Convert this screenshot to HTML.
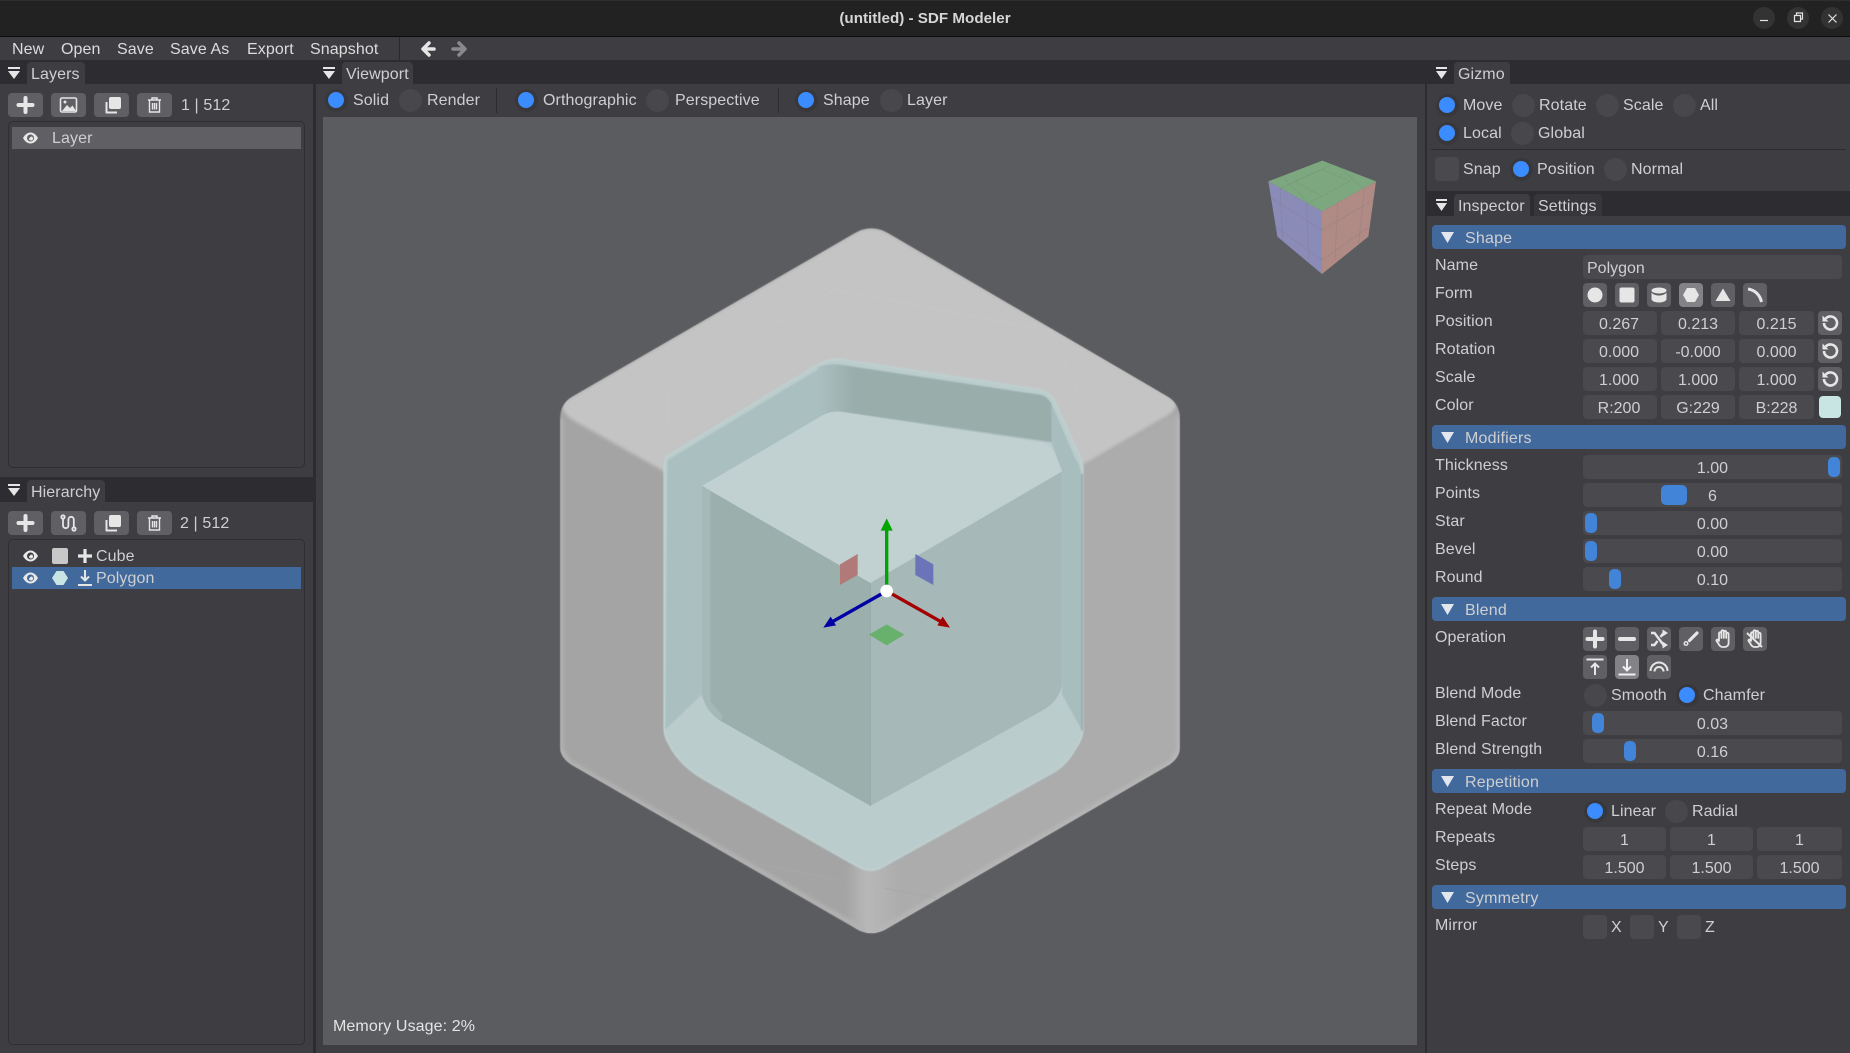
<!DOCTYPE html>
<html><head><meta charset="utf-8"><title>SDF Modeler</title>
<style>
html,body{margin:0;padding:0;width:1850px;height:1053px;overflow:hidden;background:#3e3d42;font-family:"Liberation Sans",sans-serif;font-size:16px;color:#cfcfd1}
div,span,svg{position:absolute}
.t{white-space:nowrap;line-height:24px;height:24px;letter-spacing:.1px;margin-top:1px}
.bar{background:#2d2c31;height:25px}
.tab{background:#3e3d42;height:22px;border-radius:4px 4px 0 0;line-height:25px;padding-left:4px;box-sizing:border-box;white-space:nowrap;letter-spacing:.1px}
.f{height:24px;background:#4a494e;border-radius:4px;text-align:center;line-height:27px;white-space:nowrap}
.b{width:24px;height:24px;background:#605f64;border-radius:4px}
.tb{width:35px;height:24px;background:#605f64;border-radius:4px}
.a{background:#838286}
.h{left:1432px;width:414px;height:24px;background:#41699c;border-radius:4px}
.h span{left:33px;top:0;line-height:27px;white-space:nowrap;letter-spacing:.2px}
.r{width:23px;height:23px;border-radius:50%;background:#48474c;margin-left:-.5px;margin-top:-.5px}
.r.on{background:#38373c}
.r.on:after{content:"";position:absolute;left:3.500px;top:3.500px;width:16px;height:16px;border-radius:50%;background:#3b8cff}
.th{background:#4285d8;border-radius:5px;height:20px;width:12px}
.c{width:24px;height:24px;background:#4a494e;border-radius:4px}
.ic{left:0;top:0;width:24px;height:24px;overflow:visible}
.l{left:1435px}
</style></head><body>

<!-- title bar -->
<div style="left:0;top:0;width:1850px;height:37px;background:#222;border-top:1px solid #2e2e2e;border-bottom:1px solid #0c0c0c;box-sizing:border-box"></div>
<div style="left:0;top:7px;width:1850px;text-align:center;line-height:24px;font-weight:bold;font-size:15.200px;color:#d6d6d6">(untitled) - SDF Modeler</div>
<div style="left:1753px;top:7px;width:22px;height:22px;border-radius:50%;background:#333"></div>
<div style="left:1787px;top:7px;width:22px;height:22px;border-radius:50%;background:#333"></div>
<div style="left:1821px;top:7px;width:22px;height:22px;border-radius:50%;background:#333"></div>
<svg style="left:1750px;top:0" width="100" height="37" fill="none" stroke="#e4e4e4" stroke-width="1.200"><path d="M10 20.500h8"/><path d="M44.500 15.500h6v6h-6z"/><path d="M46.500 15v-2h6v6h-2"/><path d="M78.500 14.500l8 8M86.500 14.500l-8 8"/></svg>

<!-- menu bar -->
<div style="left:1px;top:37px;width:1848px;height:23px;background:#3e3d42"></div>
<div class="t" style="left:12px;top:37px;color:#dcdcdc">New</div>
<div class="t" style="left:61px;top:37px;color:#dcdcdc">Open</div>
<div class="t" style="left:117px;top:37px;color:#dcdcdc">Save</div>
<div class="t" style="left:170px;top:37px;color:#dcdcdc">Save As</div>
<div class="t" style="left:247px;top:37px;color:#dcdcdc">Export</div>
<div class="t" style="left:310px;top:37px;color:#dcdcdc">Snapshot</div>
<div style="left:399px;top:37px;width:1px;height:23px;background:#2a292e"></div>
<svg style="left:418px;top:38px" width="54" height="22" fill="none" stroke-width="3.500" stroke-linecap="round" stroke-linejoin="round"><path d="M11 5l-6 6 6 6M6 11h10" stroke="#e6e6e6"/><path d="M41 5l6 6-6 6M46 11h-11" stroke="#8a898d"/></svg>

<!-- header bars -->
<div class="bar" style="left:0;top:60px;width:316px;height:24px"></div>
<div class="bar" style="left:316px;top:60px;width:1109px;height:24px"></div>
<div class="bar" style="left:1427px;top:60px;width:423px;height:24px"></div>

<!-- vertical dividers -->
<div style="left:313px;top:60px;width:3px;height:993px;background:#2d2c31"></div>
<div style="left:1425px;top:60px;width:2px;height:993px;background:#2d2c31"></div>

<!-- tabs -->
<div class="tab" style="left:27px;top:62px;width:58px">Layers</div>
<div class="tab" style="left:342px;top:62px;width:71px">Viewport</div>
<div class="tab" style="left:1454px;top:62px;width:56px">Gizmo</div>
<svg style="left:0;top:60px" width="1850" height="24" fill="#e6e6e6"><path d="M8 7h12v2H8zM8 11h12l-6 8z"/><path d="M323 7h12v2h-12zM323 11h12l-6 8z"/><path d="M1436 7h11v2h-11zM1436 11h11l-5.500 8z"/></svg>

<!-- Layers panel -->
<div class="tb" style="left:8px;top:93px"><svg class="ic" style="width:35px" viewBox="0 0 35 24"><path d="M17.500 5v14M10.500 12h14" stroke="#e6e6e6" stroke-width="4" stroke-linecap="round" fill="none"/></svg></div>
<div class="tb" style="left:51px;top:93px"><svg class="ic" style="width:35px" viewBox="0 0 35 24" fill="none"><rect x="9.500" y="5" width="16" height="14" rx="1.500" stroke="#e6e6e6" stroke-width="1.600"/><path d="M11 18l5-6 3 3 2.500-2.500 3.500 5.500z" fill="#e6e6e6"/><circle cx="14" cy="9" r="1.500" fill="#e6e6e6"/></svg></div>
<div class="tb" style="left:94px;top:93px"><svg class="ic" style="width:35px" viewBox="0 0 35 24" fill="none"><rect x="15" y="4" width="12" height="12" rx="2" fill="#e6e6e6"/><path d="M12.500 9v10.500h10.500" stroke="#e6e6e6" stroke-width="2" stroke-linejoin="round"/></svg></div>
<div class="tb" style="left:137px;top:93px"><svg class="ic" style="width:35px" viewBox="0 0 35 24" fill="none" stroke="#e6e6e6" stroke-width="1.400"><path d="M11 7h13M15 7V5h5v2M12.500 7.500v11.500h10V7.500M15.500 10v6.500M17.500 10v6.500M19.500 10v6.500"/></svg></div>
<div class="t" style="left:181px;top:93px">1 | 512</div>
<div style="left:8px;top:121px;width:297px;height:347px;border:1px solid #2f2e33;border-radius:5px;box-sizing:border-box"></div>
<div style="left:12px;top:127px;width:289px;height:22px;background:#605f64"></div>
<svg style="left:22px;top:130px" width="17" height="16" viewBox="0 0 17 16"><path d="M1 8c2-3.500 4.500-5.500 7.500-5.500S14 4.500 16 8c-2 3.500-4.500 5.500-7.500 5.500S3 11.500 1 8z" fill="#e8e8e8"/><circle cx="8.500" cy="8" r="3.500" fill="#605f64"/><path d="M9 6.500a2 2 0 1 1-2 2" fill="#e8e8e8"/></svg>
<div class="t" style="left:52px;top:126px">Layer</div>

<!-- Hierarchy -->
<div class="bar" style="left:0;top:477px;width:313px"></div>
<div class="tab" style="left:27px;top:480px;width:78px">Hierarchy</div>
<svg style="left:0;top:477px" width="30" height="25" fill="#e6e6e6"><path d="M8 7h12v2H8zM8 11h12l-6 8z"/></svg>
<div class="tb" style="left:8px;top:511px"><svg class="ic" style="width:35px" viewBox="0 0 35 24"><path d="M17.500 5v14M10.500 12h14" stroke="#e6e6e6" stroke-width="4" stroke-linecap="round" fill="none"/></svg></div>
<div class="tb" style="left:51px;top:511px"><svg class="ic" style="width:35px" viewBox="0 0 35 24" fill="none" stroke="#e6e6e6" stroke-width="1.800"><path d="M12 7.500v7a2.700 2.700 0 0 0 5.400 0v-6a2.700 2.700 0 0 1 5.400 0v8"/><circle cx="12" cy="6" r="1.700"/><circle cx="23" cy="18" r="1.700"/></svg></div>
<div class="tb" style="left:94px;top:511px"><svg class="ic" style="width:35px" viewBox="0 0 35 24" fill="none"><rect x="15" y="4" width="12" height="12" rx="2" fill="#e6e6e6"/><path d="M12.500 9v10.500h10.500" stroke="#e6e6e6" stroke-width="2" stroke-linejoin="round"/></svg></div>
<div class="tb" style="left:137px;top:511px"><svg class="ic" style="width:35px" viewBox="0 0 35 24" fill="none" stroke="#e6e6e6" stroke-width="1.400"><path d="M11 7h13M15 7V5h5v2M12.500 7.500v11.500h10V7.500M15.500 10v6.500M17.500 10v6.500M19.500 10v6.500"/></svg></div>
<div class="t" style="left:180px;top:511px">2 | 512</div>
<div style="left:8px;top:539px;width:297px;height:506px;border:1px solid #2f2e33;border-radius:5px;box-sizing:border-box"></div>
<div style="left:12px;top:567px;width:289px;height:22px;background:#41699c"></div>
<svg style="left:22px;top:548px" width="17" height="16" viewBox="0 0 17 16"><path d="M1 8c2-3.500 4.500-5.500 7.500-5.500S14 4.500 16 8c-2 3.500-4.500 5.500-7.500 5.500S3 11.500 1 8z" fill="#e8e8e8"/><circle cx="8.500" cy="8" r="3.500" fill="#3e3d42"/><path d="M9 6.500a2 2 0 1 1-2 2" fill="#e8e8e8"/></svg>
<svg style="left:22px;top:570px" width="17" height="16" viewBox="0 0 17 16"><path d="M1 8c2-3.500 4.500-5.500 7.500-5.500S14 4.500 16 8c-2 3.500-4.500 5.500-7.500 5.500S3 11.500 1 8z" fill="#e8e8e8"/><circle cx="8.500" cy="8" r="3.500" fill="#41699c"/><path d="M9 6.500a2 2 0 1 1-2 2" fill="#e8e8e8"/></svg>
<div style="left:52px;top:548px;width:16px;height:16px;background:#c8c8c8;border-radius:2px"></div>
<svg style="left:52px;top:570px" width="16" height="16" viewBox="0 0 16 16"><path d="M4.500 1h7L16 8l-4.500 7h-7L0 8z" fill="#c8e5e4"/></svg>
<svg style="left:77px;top:548px" width="16" height="16"><path d="M8 1v14M1 8h14" stroke="#e6e6e6" stroke-width="3.200" fill="none"/></svg>
<svg style="left:77px;top:569px" width="16" height="18" fill="none" stroke="#e6e6e6" stroke-width="2"><path d="M8 1v10M4 7.500l4 4 4-4M1 16h14"/></svg>
<div class="t" style="left:96px;top:544px">Cube</div>
<div class="t" style="left:96px;top:566px">Polygon</div>

<!-- Viewport toolbar -->
<div class="r on" style="left:325px;top:89px"></div><div class="t" style="left:353px;top:88px">Solid</div>
<div class="r" style="left:399px;top:89px"></div><div class="t" style="left:427px;top:88px">Render</div>
<div style="left:496px;top:88px;width:1px;height:25px;background:#2d2c31"></div>
<div class="r on" style="left:515px;top:89px"></div><div class="t" style="left:543px;top:88px">Orthographic</div>
<div class="r" style="left:646px;top:89px"></div><div class="t" style="left:675px;top:88px">Perspective</div>
<div style="left:778px;top:88px;width:1px;height:25px;background:#2d2c31"></div>
<div class="r on" style="left:795px;top:89px"></div><div class="t" style="left:823px;top:88px">Shape</div>
<div class="r" style="left:880px;top:89px"></div><div class="t" style="left:907px;top:88px">Layer</div>

<!-- Viewport -->
<div style="left:323px;top:117px;width:1094px;height:928px;background:#5b5c60"></div>
<svg style="left:0;top:0" width="1850" height="1053">
<defs>
<linearGradient id="st" x1="0" x2="1" y1="0" y2="0"><stop offset="0" stop-color="#b8b8b8" stop-opacity="0"/><stop offset=".4" stop-color="#b8b8b8"/><stop offset="1" stop-color="#b8b8b8" stop-opacity="0"/></linearGradient>
<linearGradient id="tw" gradientUnits="userSpaceOnUse" x1="660" y1="0" x2="750" y2="0"><stop offset="0" stop-color="#aabfbf"/><stop offset="1" stop-color="#99adab"/></linearGradient>
<clipPath id="sil"><path d="M745,70 Q787,47 830,70 L1490,405 Q1520,420 1520,450 L1520,1130 Q1520,1150 1495,1165 L830,1500 Q787,1525 745,1500 L75,1165 Q48,1150 48,1130 L48,450 Q48,420 78,405 Z"/></clipPath>
<filter id="bl" x="-5%" y="-5%" width="110%" height="110%"><feGaussianBlur stdDeviation="1.500"/></filter>
<filter id="bl2" x="-5%" y="-5%" width="110%" height="110%"><feGaussianBlur stdDeviation="4"/></filter>
</defs>
<g transform="translate(540,200) scale(.42088,.48473)">
 <path d="M745,70 Q787,47 830,70 L1490,405 Q1520,420 1520,450 L1520,1130 Q1520,1150 1495,1165 L830,1500 Q787,1525 745,1500 L75,1165 Q48,1150 48,1130 L48,450 Q48,420 78,405 Z" fill="#a4a4a4" filter="url(#bl)"/>
 <g clip-path="url(#sil)">
  <g filter="url(#bl2)">
  <path d="M787,800 L1530,430 L1530,1150 L787,1530 Z" fill="#acacac"/>
  <rect x="725" y="1370" width="130" height="160" fill="url(#st)"/>
  <path d="M50,450 L50,1135 L70,1160 L775,1510" fill="none" stroke="#b2b2b2" stroke-width="10"/>
  <path d="M1518,450 L1518,1135 L1500,1160 L800,1510" fill="none" stroke="#b6b6b6" stroke-width="10"/>
  <path d="M745,70 Q787,47 830,70 L1495,405 Q1528,425 1490,445 L787,800 L80,455 Q28,425 78,405 Z" fill="#c4c4c4"/>
  </g>
 </g>
 <path d="M305,470 L305,385 L700,185 L1215,270 L1330,500" fill="none" stroke="#c7c7c7" stroke-width="2"/>
 <path d="M520,1370 L720,1405 M820,1420 L940,1440" fill="none" stroke="#a8a8a8" stroke-width="2"/>
 <path d="M300,530 L660,340 Q690,325 720,330 L1190,392 Q1215,398 1225,420 L1275,515 Q1290,540 1290,560 L1290,1090 Q1290,1110 1270,1135 Q1250,1165 1220,1180 L815,1375 Q787,1390 755,1375 L390,1195 Q330,1165 305,1120 Q295,1105 295,1090 L295,555 Q295,540 300,530Z" fill="#bbcccc" stroke="#bfd0d0" stroke-width="4" filter="url(#bl)"/>
 <g filter="url(#bl)">
 <path d="M303,537 L665,347 Q690,337 715,342 L715,435 L385,590 L385,1020 L298,1092 Z" fill="#aabfbf"/>
 <path d="M660,345 Q690,336 715,340 L1190,402 Q1205,405 1215,420 L1218,500 L700,435 L660,455 Z" fill="url(#tw)"/>
 <path d="M1215,420 L1270,530 Q1285,550 1285,565 L1285,1090 L1240,1020 L1240,560 L1215,500 Z" fill="#a8bdbd"/>
 <path d="M1288,565 L1288,1095" fill="none" stroke="#9fb0b0" stroke-width="6"/>
 </g>
 <path d="M385,590 L785,790 L785,1250 L430,1075 Q395,1055 385,1020 Z" fill="#9bafad"/>
 <path d="M785,790 L1240,560 L1240,1000 Q1235,1030 1200,1050 L785,1250 Z" fill="#a6b8b8"/>
 <path d="M385,590 L660,450 Q690,432 720,438 L1190,500 Q1215,505 1225,525 L1240,560 L785,790 Z" fill="#c1d1d1"/>
 <path d="M385,590 L405,600 L405,1035 L432,1062 L432,1076 Q395,1055 385,1020 Z" fill="#a5bab8" filter="url(#bl)"/>
 <path d="M1232,565 L1232,1010" fill="none" stroke="#a0b4b3" stroke-width="10" filter="url(#bl)"/>
 <path d="M785,792 L785,1250" stroke="#97aaa8" stroke-width="2.500" fill="none"/>
</g>

<!-- gizmo -->
<g transform="translate(800,500) scale(.33333)">
 <path d="M173,162 L173,225 L120,255 L120,193 Z" fill="#b17a78"/>
 <path d="M346,162 L400,193 L400,255 L346,225 Z" fill="#6b74b8"/>
 <path d="M260,373 L313,404 L260,436 L207,404 Z" fill="#68b16c"/>
 <path d="M260,265V85" stroke="#00a500" stroke-width="10" fill="none"/>
 <path d="M260,55 L242,92 L278,92 Z" fill="#00a500"/>
 <path d="M260,273 L92,368" stroke="#0000a5" stroke-width="10" fill="none"/>
 <path d="M70,383 L92,350 L108,376 Z" fill="#0000a5"/>
 <path d="M260,273 L428,368" stroke="#a50000" stroke-width="10" fill="none"/>
 <path d="M450,383 L428,350 L412,376 Z" fill="#a50000"/>
 <circle cx="260" cy="273" r="19" fill="#fff"/>
</g>

<!-- orientation cube -->
<g transform="translate(1240,140) scale(.33333)">
 <path d="M247,62 L408,124 L246,214 L85,124 Z" fill="#7da87f"/>
 <path d="M85,124 L246,214 L246,402 L112,290 Z" fill="#8b8bb8"/>
 <path d="M246,214 L408,124 L385,290 L246,402 Z" fill="#b08a85"/>
 <g fill="none" stroke="#6a6f6a" stroke-opacity=".3" stroke-width="2" stroke-dasharray="14 3">
  <path d="M122,105 L207,190 M165,124 L246,170 M245,88 L330,124 M285,70 L370,145 M165,124 L245,88 M205,190 L330,124 M122,145 L285,70"/>
  <path d="M120,142 L128,305 M200,190 L206,358 M95,175 L246,270 M108,262 L246,360"/>
  <path d="M293,188 L285,360 M373,145 L356,313 M246,270 L403,178 M246,360 L386,262"/>
 </g>
</g>
</svg>
<div class="t" style="left:333px;top:1014px;color:#e4e4e4">Memory Usage: 2%</div>

<!-- Gizmo panel -->
<div class="r on" style="left:1436px;top:94px"></div><div class="t" style="left:1463px;top:93px">Move</div>
<div class="r" style="left:1512px;top:94px"></div><div class="t" style="left:1539px;top:93px">Rotate</div>
<div class="r" style="left:1596px;top:94px"></div><div class="t" style="left:1623px;top:93px">Scale</div>
<div class="r" style="left:1673px;top:94px"></div><div class="t" style="left:1700px;top:93px">All</div>
<div class="r on" style="left:1436px;top:122px"></div><div class="t" style="left:1463px;top:121px">Local</div>
<div class="r" style="left:1511px;top:122px"></div><div class="t" style="left:1538px;top:121px">Global</div>
<div style="left:1431px;top:149px;width:415px;height:1px;background:#2d2c31"></div>
<div class="c" style="left:1435px;top:157px"></div><div class="t" style="left:1463px;top:157px">Snap</div>
<div class="r on" style="left:1510px;top:158px"></div><div class="t" style="left:1537px;top:157px">Position</div>
<div class="r" style="left:1604px;top:158px"></div><div class="t" style="left:1631px;top:157px">Normal</div>

<!-- Inspector -->
<div class="bar" style="left:1427px;top:191px;width:423px"></div>
<svg style="left:1428px;top:191px" width="24" height="25" fill="#e6e6e6"><path d="M8 8h11v2H8zM8 12h11l-5.500 8z"/></svg>
<div class="tab" style="left:1454px;top:194px;width:76px">Inspector</div>
<div class="tab" style="left:1534px;top:194px;width:68px;background:#37363b">Settings</div>

<div class="h" style="top:225px"><svg style="left:9px;top:7px" width="13" height="11"><path d="M0 0h13l-6.500 11z" fill="#e2e6ee"/></svg><span>Shape</span></div>
<div class="t l" style="top:253px">Name</div>
<div class="f" style="left:1583px;top:255px;width:259px;text-align:left;padding-left:4px;box-sizing:border-box">Polygon</div>
<div class="t l" style="top:281px">Form</div>
<div class="b" style="left:1583px;top:283px"><svg class="ic"><circle cx="12" cy="12" r="7.500" fill="#e6e6e6"/></svg></div>
<div class="b" style="left:1615px;top:283px"><svg class="ic"><rect x="4.500" y="4.500" width="15" height="15" rx="2" fill="#e6e6e6"/></svg></div>
<div class="b" style="left:1647px;top:283px"><svg class="ic"><path d="M4.500 9.500v6.500c0 2 3.500 3.500 7.500 3.500s7.500-1.500 7.500-3.500V9.500c-1.500 2-4.500 3-7.500 3s-6-1-7.500-3z" fill="#e6e6e6"/><ellipse cx="12" cy="7.500" rx="7.500" ry="3" fill="#e6e6e6"/></svg></div>
<div class="b a" style="left:1679px;top:283px"><svg class="ic"><path d="M8 5h8l4 7-4 7H8l-4-7z" fill="#e6e6e6"/></svg></div>
<div class="b" style="left:1711px;top:283px"><svg class="ic"><path d="M12 5.500l7.500 12.500h-15z" fill="#e6e6e6"/></svg></div>
<div class="b" style="left:1743px;top:283px"><svg class="ic"><path d="M5 6c7 1 12 6 13.500 13" fill="none" stroke="#e6e6e6" stroke-width="3"/></svg></div>

<div class="t l" style="top:309px">Position</div>
<div class="f" style="left:1583px;top:311px;width:72px;padding-right:2px">0.267</div><div class="f" style="left:1661px;top:311px;width:74px">0.213</div><div class="f" style="left:1739px;top:311px;width:75px">0.215</div>
<div class="b" style="left:1818px;top:311px"><svg class="ic" fill="none" stroke="#e6e6e6" stroke-width="2.600"><path d="M7.700 7.600A6.500 6.500 0 1 1 6 12"/><path d="M4.500 4.500v6h6z" fill="#e6e6e6" stroke="none"/></svg></div>
<div class="t l" style="top:337px">Rotation</div>
<div class="f" style="left:1583px;top:339px;width:72px;padding-right:2px">0.000</div><div class="f" style="left:1661px;top:339px;width:74px">-0.000</div><div class="f" style="left:1739px;top:339px;width:75px">0.000</div>
<div class="b" style="left:1818px;top:339px"><svg class="ic" fill="none" stroke="#e6e6e6" stroke-width="2.600"><path d="M7.700 7.600A6.500 6.500 0 1 1 6 12"/><path d="M4.500 4.500v6h6z" fill="#e6e6e6" stroke="none"/></svg></div>
<div class="t l" style="top:365px">Scale</div>
<div class="f" style="left:1583px;top:367px;width:72px;padding-right:2px">1.000</div><div class="f" style="left:1661px;top:367px;width:74px">1.000</div><div class="f" style="left:1739px;top:367px;width:75px">1.000</div>
<div class="b" style="left:1818px;top:367px"><svg class="ic" fill="none" stroke="#e6e6e6" stroke-width="2.600"><path d="M7.700 7.600A6.500 6.500 0 1 1 6 12"/><path d="M4.500 4.500v6h6z" fill="#e6e6e6" stroke="none"/></svg></div>
<div class="t l" style="top:393px">Color</div>
<div class="f" style="left:1583px;top:395px;width:72px;padding-right:2px">R:200</div><div class="f" style="left:1661px;top:395px;width:74px">G:229</div><div class="f" style="left:1739px;top:395px;width:75px">B:228</div>
<div style="left:1819px;top:396px;width:22px;height:22px;background:#c8e5e4;border-radius:4px"></div>

<div class="h" style="top:425px"><svg style="left:9px;top:7px" width="13" height="11"><path d="M0 0h13l-6.500 11z" fill="#e2e6ee"/></svg><span>Modifiers</span></div>
<div class="t l" style="top:453px">Thickness</div>
<div class="f" style="left:1583px;top:455px;width:259px">1.00</div><div class="th" style="left:1828px;top:457px"></div>
<div class="t l" style="top:481px">Points</div>
<div class="f" style="left:1583px;top:483px;width:259px">6</div><div class="th" style="left:1661px;top:485px;width:26px"></div>
<div class="t l" style="top:509px">Star</div>
<div class="f" style="left:1583px;top:511px;width:259px">0.00</div><div class="th" style="left:1585px;top:513px"></div>
<div class="t l" style="top:537px">Bevel</div>
<div class="f" style="left:1583px;top:539px;width:259px">0.00</div><div class="th" style="left:1585px;top:541px"></div>
<div class="t l" style="top:565px">Round</div>
<div class="f" style="left:1583px;top:567px;width:259px">0.10</div><div class="th" style="left:1609px;top:569px"></div>

<div class="h" style="top:597px"><svg style="left:9px;top:7px" width="13" height="11"><path d="M0 0h13l-6.500 11z" fill="#e2e6ee"/></svg><span>Blend</span></div>
<div class="t l" style="top:625px">Operation</div>
<div class="b" style="left:1583px;top:627px"><svg class="ic"><path d="M12 4.500v15M4.500 12h15" stroke="#e6e6e6" stroke-width="4" stroke-linecap="round" fill="none"/></svg></div>
<div class="b" style="left:1615px;top:627px"><svg class="ic"><path d="M5 12h14" stroke="#e6e6e6" stroke-width="4" stroke-linecap="round" fill="none"/></svg></div>
<div class="b" style="left:1647px;top:627px"><svg class="ic" fill="none" stroke="#e6e6e6" stroke-width="2.400"><path d="M4 6h3.500l9 12h1M4 18h3.500l3-4M13.500 10l3-4h1"/><path d="M15.500 2.500l5.500 3.500-5.500 3.500zM15.500 14.500l5.500 3.500-5.500 3.500z" fill="#e6e6e6" stroke="none"/></svg></div>
<div class="b" style="left:1679px;top:627px"><svg class="ic" fill="none" stroke="#e6e6e6"><path d="M18 6l-7.500 7.500" stroke-width="3.200" stroke-linecap="round"/><circle cx="7" cy="16.500" r="1.800" stroke-width="1.500"/></svg></div>
<div class="b" style="left:1711px;top:627px"><svg class="ic" fill="none" stroke="#e6e6e6" stroke-width="1.800" stroke-linejoin="round"><path d="M8 14V6.500a1.200 1.200 0 0 1 2.400 0V11V4.500a1.200 1.200 0 0 1 2.400 0v6.500V5a1.200 1.200 0 0 1 2.400 0v6V7a1.200 1.200 0 0 1 2.400 0v9c0 2.500-2 4-4 4h-2c-2 0-3-1-4-3l-2-3c-.6-1 .8-2 1.600-1z"/></svg></div>
<div class="b" style="left:1743px;top:627px"><svg class="ic" fill="none" stroke="#e6e6e6" stroke-width="1.800" stroke-linejoin="round"><path d="M8 14V6.500a1.200 1.200 0 0 1 2.400 0V11V4.500a1.200 1.200 0 0 1 2.400 0v6.500V5a1.200 1.200 0 0 1 2.400 0v6V7a1.200 1.200 0 0 1 2.400 0v9c0 2.500-2 4-4 4h-2c-2 0-3-1-4-3l-2-3c-.6-1 .8-2 1.600-1z"/><path d="M4 6l15 14" stroke-width="2"/></svg></div>
<div class="b" style="left:1583px;top:655px"><svg class="ic" fill="none" stroke="#e6e6e6" stroke-width="2"><path d="M3.500 4.500h17M12 20V9M8 12.500l4-4 4 4"/></svg></div>
<div class="b a" style="left:1615px;top:655px"><svg class="ic" fill="none" stroke="#f0f0f0" stroke-width="2"><path d="M12 4v11M8 11.500l4 4 4-4M3.500 19.500h17"/></svg></div>
<div class="b" style="left:1647px;top:655px"><svg class="ic" fill="none" stroke="#e6e6e6" stroke-width="2"><path d="M3.500 16a8.500 8.500 0 0 1 17 0M7.500 16.500a4.500 4.500 0 0 1 9 0"/></svg></div>
<div class="t l" style="top:681px">Blend Mode</div>
<div class="r" style="left:1584px;top:684px"></div><div class="t" style="left:1611px;top:683px">Smooth</div>
<div class="r on" style="left:1676px;top:684px"></div><div class="t" style="left:1703px;top:683px">Chamfer</div>
<div class="t l" style="top:709px">Blend Factor</div>
<div class="f" style="left:1583px;top:711px;width:259px">0.03</div><div class="th" style="left:1592px;top:713px"></div>
<div class="t l" style="top:737px">Blend Strength</div>
<div class="f" style="left:1583px;top:739px;width:259px">0.16</div><div class="th" style="left:1624px;top:741px"></div>

<div class="h" style="top:769px"><svg style="left:9px;top:7px" width="13" height="11"><path d="M0 0h13l-6.500 11z" fill="#e2e6ee"/></svg><span>Repetition</span></div>
<div class="t l" style="top:797px">Repeat Mode</div>
<div class="r on" style="left:1584px;top:800px"></div><div class="t" style="left:1611px;top:799px">Linear</div>
<div class="r" style="left:1665px;top:800px"></div><div class="t" style="left:1692px;top:799px">Radial</div>
<div class="t l" style="top:825px">Repeats</div>
<div class="f" style="left:1583px;top:827px;width:83px">1</div><div class="f" style="left:1670px;top:827px;width:83px">1</div><div class="f" style="left:1757px;top:827px;width:85px">1</div>
<div class="t l" style="top:853px">Steps</div>
<div class="f" style="left:1583px;top:855px;width:83px">1.500</div><div class="f" style="left:1670px;top:855px;width:83px">1.500</div><div class="f" style="left:1757px;top:855px;width:85px">1.500</div>

<div class="h" style="top:885px"><svg style="left:9px;top:7px" width="13" height="11"><path d="M0 0h13l-6.500 11z" fill="#e2e6ee"/></svg><span>Symmetry</span></div>
<div class="t l" style="top:913px">Mirror</div>
<div class="c" style="left:1583px;top:915px"></div><div class="t" style="left:1611px;top:915px">X</div>
<div class="c" style="left:1630px;top:915px"></div><div class="t" style="left:1658px;top:915px">Y</div>
<div class="c" style="left:1677px;top:915px"></div><div class="t" style="left:1705px;top:915px">Z</div>
</body></html>
